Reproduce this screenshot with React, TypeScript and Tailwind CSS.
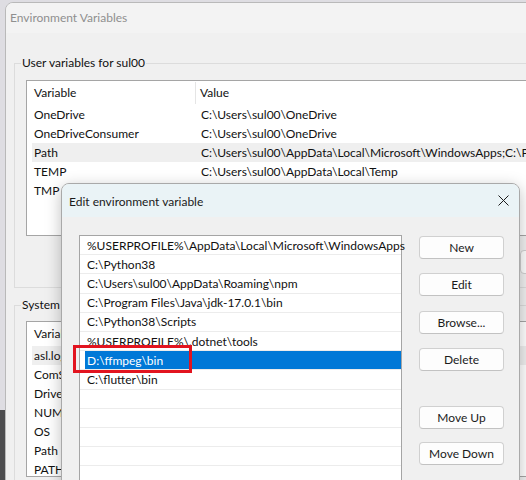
import React from "react";

const font = { fontFamily: 'Lato, "Noto Sans", sans-serif' };

const userVars: [string, string, boolean][] = [
  ["OneDrive", "C:\\Users\\sul00\\OneDrive", false],
  ["OneDriveConsumer", "C:\\Users\\sul00\\OneDrive", false],
  ["Path", "C:\\Users\\sul00\\AppData\\Local\\Microsoft\\WindowsApps;C:\\Python38;C:\\Users", true],
  ["TEMP", "C:\\Users\\sul00\\AppData\\Local\\Temp", false],
  ["TMP", "C:\\Users\\sul00\\AppData\\Local\\Temp", false],
];

const sysVars: [string, string, boolean][] = [
  ["asl.log", "Destination=file", true],
  ["ComSpec", "C:\\Windows\\system32\\cmd.exe", false],
  ["DriverData", "C:\\Windows\\System32\\Drivers\\DriverData", false],
  ["NUMBER_OF_PROCESSORS", "8", false],
  ["OS", "Windows_NT", false],
  ["Path", "C:\\Windows\\system32", false],
  ["PATHEXT", ".COM;.EXE;.BAT", false],
];

const paths = [
  "%USERPROFILE%\\AppData\\Local\\Microsoft\\WindowsApps",
  "C:\\Python38",
  "C:\\Users\\sul00\\AppData\\Roaming\\npm",
  "C:\\Program Files\\Java\\jdk-17.0.1\\bin",
  "C:\\Python38\\Scripts",
  "%USERPROFILE%\\.dotnet\\tools",
  "D:\\ffmpeg\\bin",
  "C:\\flutter\\bin",
  "",
  "",
  "",
  "",
  "",
  "",
];

function VarList({ rows }: { rows: [string, string, boolean][] }) {
  return (
    <div className="h-[156px] w-[600px] overflow-hidden border border-[#a5a5a5] bg-white text-[12px] text-[#111]">
      <div className="flex h-[24px] items-center">
        <div className="flex h-[22px] w-[169px] shrink-0 items-center border-r border-[#e5e5e5] pl-[7px]">Variable</div>
        <div className="pl-[4px]">Value</div>
      </div>
      {rows.map(([k, v, hl]) => (
        <div key={k} className={`ml-[5px] flex h-[19px] items-center ${hl ? "bg-[#efefef]" : ""}`}>
          <div className="w-[164px] shrink-0 overflow-hidden whitespace-nowrap pl-[2px]">{k}</div>
          <div className="whitespace-nowrap pl-[5px]">{v}</div>
        </div>
      ))}
    </div>
  );
}

function Btn({ label, className = "" }: { label: string; className?: string }) {
  return (
    <div
      className={`flex h-[23px] w-[85px] items-center justify-center rounded-[4px] border border-[#d0d0d0] border-b-[#c2c2c2] bg-[#fdfdfd] text-[12px] text-[#1b1b1b] ${className}`}
    >
      {label}
    </div>
  );
}

export default function App() {
  return (
    <div className="relative h-[480px] w-[526px] overflow-hidden" style={font}>
      {/* desktop background */}
      <div className="flex h-full w-full flex-col">
        <div className="h-[410px] bg-[#dedde2]" />
        <div className="flex-1 bg-[#4d4d4f]" />
      </div>

      {/* Outer window: Environment Variables */}
      <div className="absolute left-[5px] top-[2px] flex h-[500px] w-[560px] flex-col overflow-hidden rounded-tl-[8px] border border-[#b9b9b9] bg-[#f0f0f0]">
        <div className="flex h-[30px] items-center bg-[#f3f3f3] pl-[4px] text-[12px] text-[#8f8f8f]">
          Environment Variables
        </div>
        <div className="flex flex-col px-[8px] pt-[22px]">
          <fieldset className="border border-[#dcdcdc] pb-[13px] pl-[11px]">
            <legend className="-ml-[5px] px-[1px] text-[12px] leading-[16px] text-[#111]">User variables for sul00</legend>
            <div className="mt-[9px]">
              <VarList rows={userVars} />
            </div>
            <div className="mt-[14px] flex">
              <div className="ml-[494px] h-[24px] w-[85px] rounded-[4px] border border-[#cfcfcf] bg-[#fdfdfd]" />
            </div>
          </fieldset>
          <fieldset className="mt-[9px] border border-[#dcdcdc] pb-[13px] pl-[11px]">
            <legend className="-ml-[5px] px-[1px] text-[12px] leading-[16px] text-[#111]">System variables</legend>
            <div className="mt-[8px]">
              <VarList rows={sysVars} />
            </div>
          </fieldset>
        </div>
      </div>

      {/* Edit environment variable dialog */}
      <div className="absolute left-[61px] top-[183px] flex h-[320px] w-[459px] flex-col overflow-hidden rounded-t-[8px] border border-[#a9a9a9] bg-[#f0f0f0] shadow-[0_4px_16px_rgba(0,0,0,0.25)]">
        <div className="flex h-[33px] shrink-0 items-center justify-between bg-[#eaf3f6] pl-[7px] pr-[9px]">
          <span className="pt-[2px] text-[12px] text-[#1a1a1a]">Edit environment variable</span>
          <svg width="11" height="11" viewBox="0 0 11 11" className="mr-[1px]">
            <path d="M0.5 0.5 L10.5 10.5 M10.5 0.5 L0.5 10.5" stroke="#1c1c1c" strokeWidth="1" />
          </svg>
        </div>
        <div className="relative flex gap-[17px] pl-[17px] pt-[18px]">
          <div className="h-[300px] w-[323px] border border-[#a5a5a5] bg-white text-[12px] text-[#111]">
            {paths.map((p, i) => (
              <div key={i} className="flex h-[19.2px] items-stretch border-b border-[#ececec] pl-[5px]">
                <div
                  className={`flex flex-1 items-center whitespace-nowrap pl-[2px] pt-[1px] ${
                    i === 6 ? "bg-[#0078d7] text-white" : ""
                  }`}
                >
                  {p}
                </div>
              </div>
            ))}
          </div>
          <div className="mt-[1px] flex flex-col">
            <Btn label="New" />
            <Btn label="Edit" className="mt-[14px]" />
            <Btn label="Browse..." className="mt-[15px]" />
            <Btn label="Delete" className="mt-[14px]" />
            <Btn label="Move Up" className="mt-[35px]" />
            <Btn label="Move Down" className="mt-[13px]" />
          </div>
          <div className="absolute left-[11px] top-[128px] h-[28px] w-[119px] border-[3px] border-[#e2141f]" />
        </div>
      </div>
    </div>
  );
}
